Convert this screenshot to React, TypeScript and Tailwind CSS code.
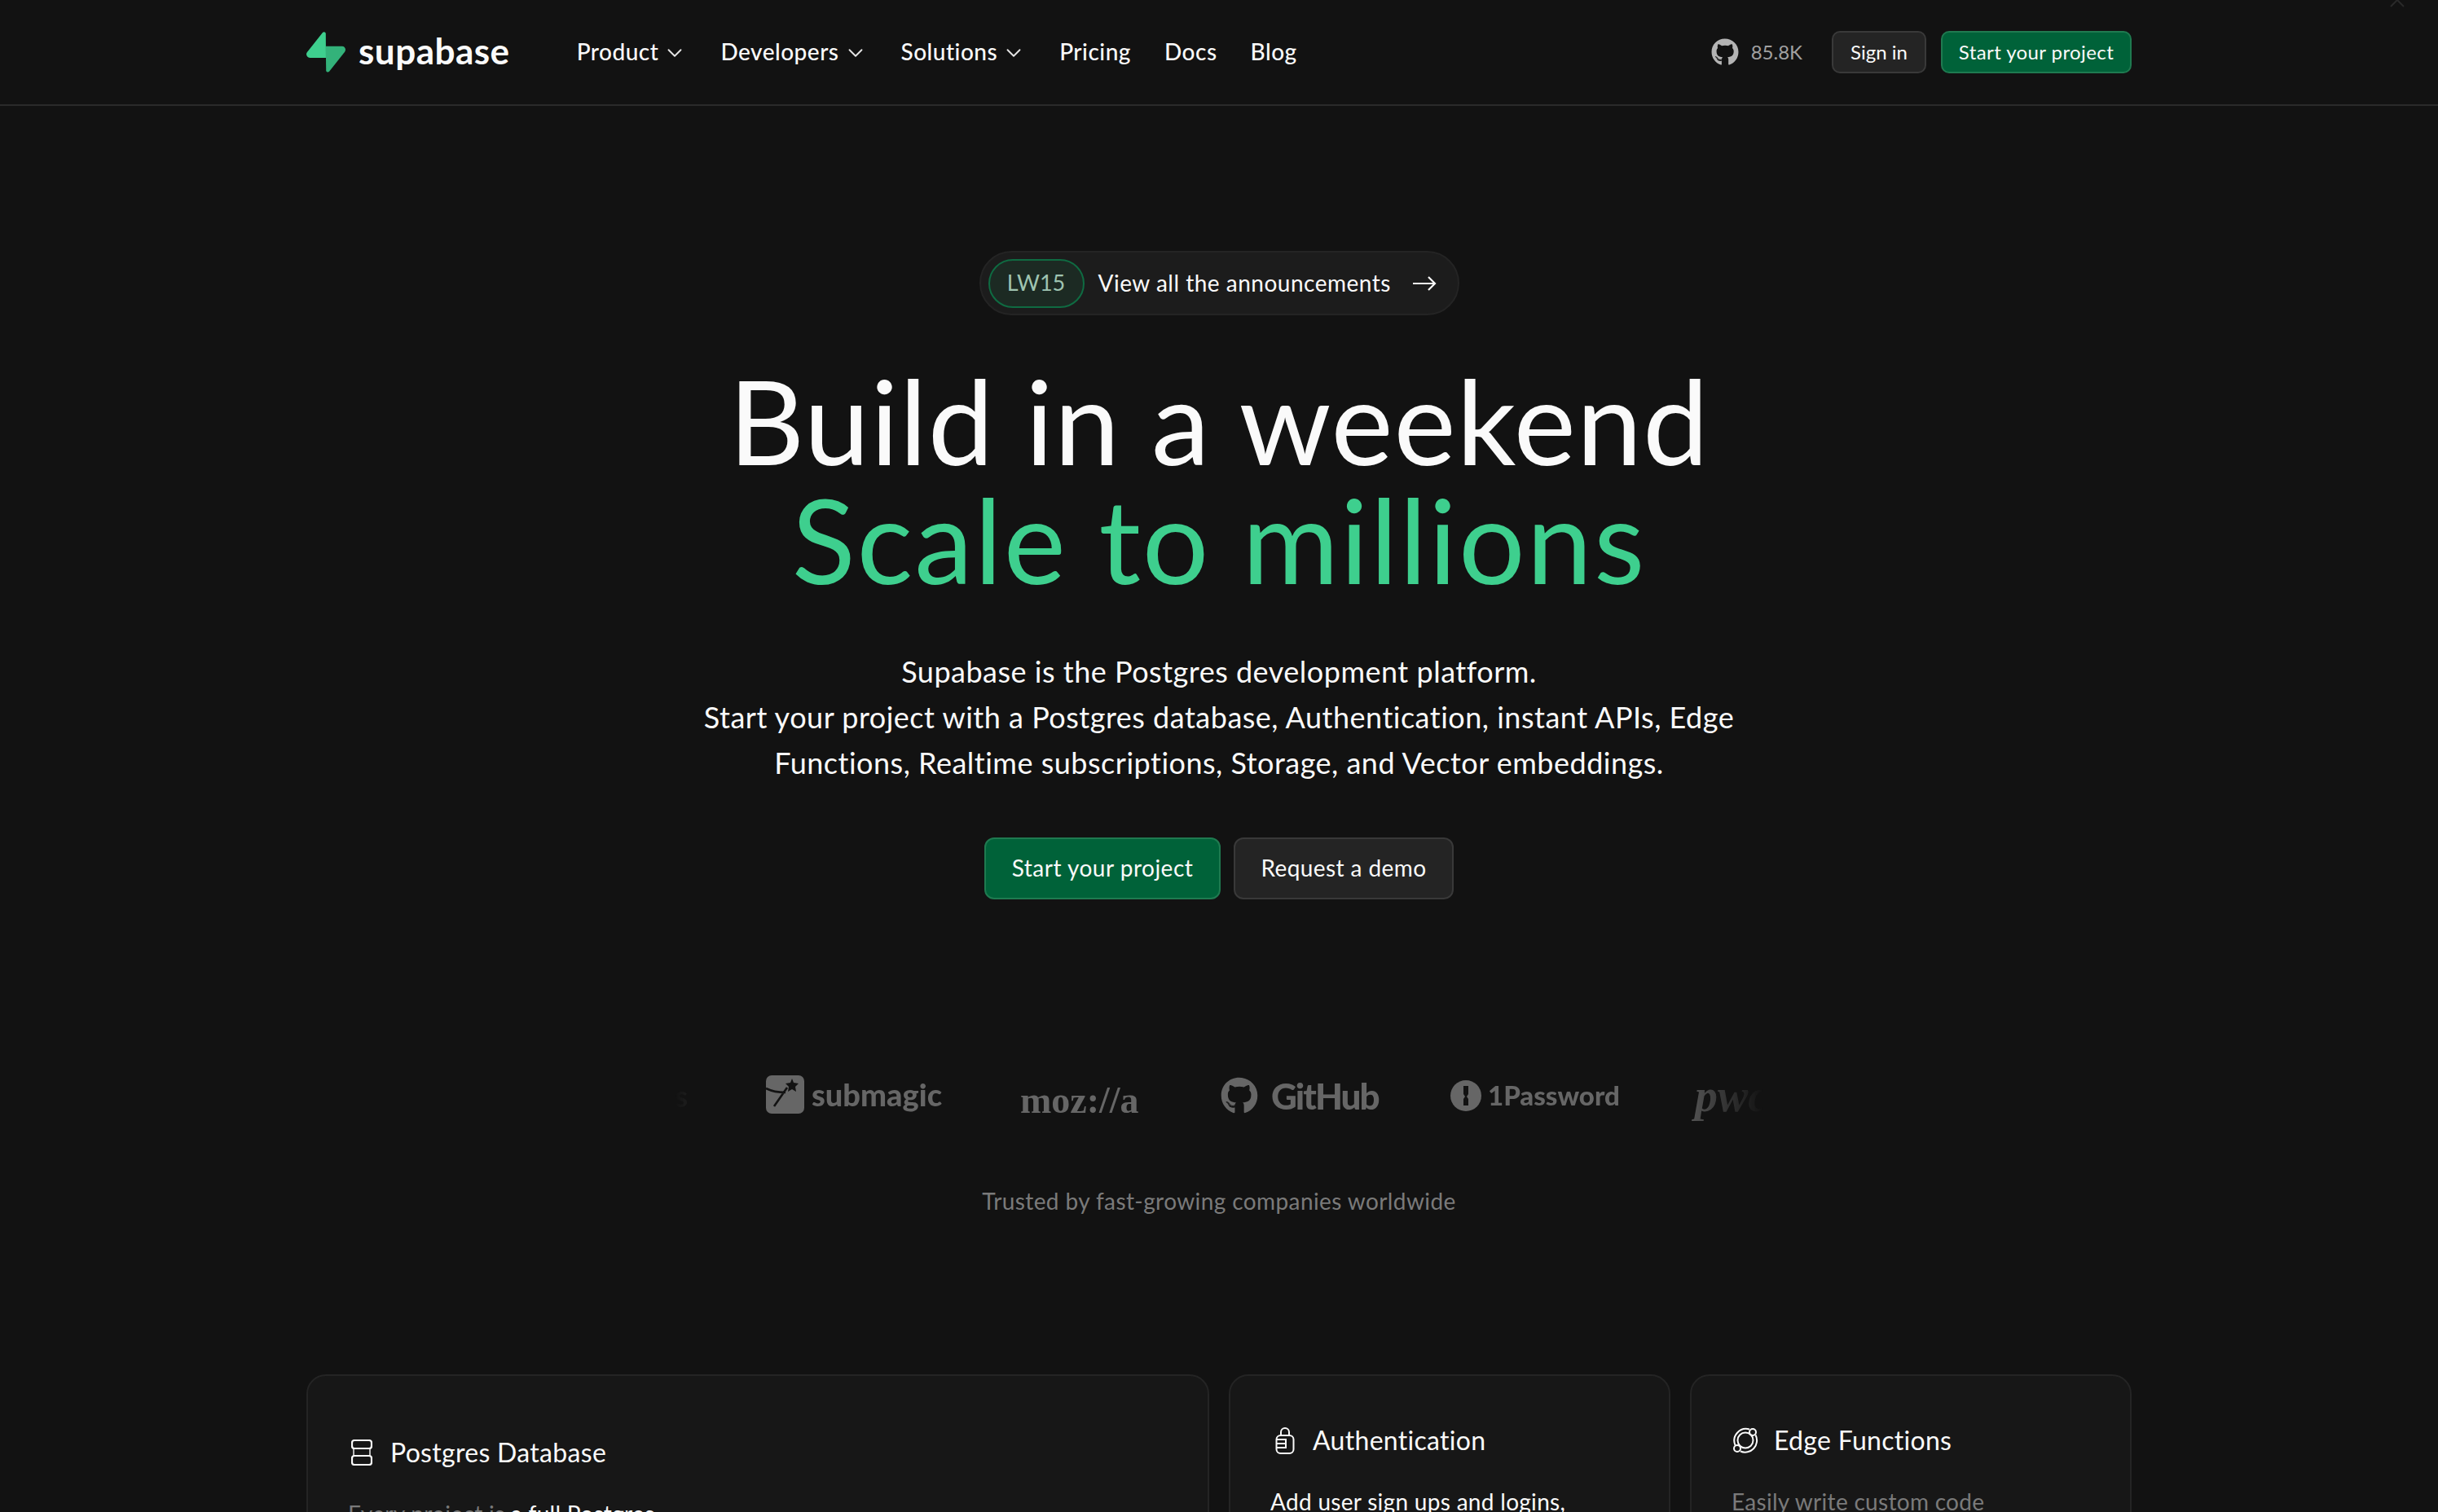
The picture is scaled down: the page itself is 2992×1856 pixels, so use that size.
import React from 'react';
import { ChevronDown } from 'lucide-react';
import { FaGithub } from 'react-icons/fa';

const font = "font-['Lato','Noto_Sans',sans-serif]";

const Bolt: React.FC = () => (
  <svg width="48" height="50" viewBox="0 0 109 113" fill="none">
    <path d="M63.7076 110.284C60.8481 113.885 55.0502 111.912 54.9813 107.314L53.9738 40.0627L99.1935 40.0627C107.384 40.0627 111.952 49.5228 106.859 55.9374L63.7076 110.284Z" fill="#33b27a" />
    <path d="M45.317 2.07103C48.1765 -1.53037 53.9745 0.442937 54.0434 5.041L54.4849 72.2922H9.83113C1.64038 72.2922 -2.92775 62.8321 2.1655 56.4175L45.317 2.07103Z" fill="#3ECF8E" />
  </svg>
);

const NavLink: React.FC<{ label: string; menu?: boolean; className?: string }> = ({ label, menu, className }) => (
  <a className={`flex items-center text-[28px] font-medium tracking-[0.5px] text-[#fafafa] ${className ?? ''}`}>
    {label}
    {menu && <ChevronDown size={30} strokeWidth={1.5} className="mt-[5px] ml-[5px] text-[#e5e5e5]" />}
  </a>
);

const DatabaseIcon = () => (
  <svg width="26" height="32" viewBox="0 0 26 32" fill="none" stroke="#fafafa" strokeWidth="2.2">
    <rect x="1" y="1" width="24" height="10" rx="3" />
    <rect x="1" y="20" width="24" height="11" rx="3" />
    <path d="M3 11v9M23 11v9" strokeWidth="1.4" />
  </svg>
);

const LockIcon = () => (
  <svg width="24" height="33" viewBox="0 0 24 33" fill="none" stroke="#fafafa" strokeWidth="2">
    <path d="M7 10V6a5 5 0 0 1 10 0v4" />
    <rect x="1.5" y="10" width="21" height="22" rx="5" />
    <path d="M2 15h11v10H2M2 20h11" />
  </svg>
);

const OrbitIcon = () => (
  <svg width="34" height="34" viewBox="0 0 34 34" fill="none" stroke="#fafafa" strokeWidth="2">
    <circle cx="17" cy="17" r="9.5" />
    <path d="M4.5 23A14.5 14.5 0 0 1 22 3.5" />
    <path d="M29.5 10.5A14.5 14.5 0 0 1 11 30.5" />
    <circle cx="26" cy="7" r="4" />
    <circle cx="7" cy="27" r="4" />
  </svg>
);

const Card: React.FC<{ icon: React.ReactNode; title: string; span?: boolean; titleClass: string; children: React.ReactNode }> = ({ icon, title, span, titleClass, children }) => (
  <div className={`${span ? 'col-span-2 pt-[70px]' : 'pt-[55px]'} h-[400px] rounded-[24px] border-2 border-[#242424] bg-[#171717] pl-[49px]`}>
    <div className={`flex items-center text-[32px] tracking-[0.3px] text-[#fafafa] ${titleClass}`}>
      {icon}
      {title}
    </div>
    <p className={`${span ? 'mt-[31px]' : 'mt-[31px]'} text-[28px] leading-[40px] tracking-[0.3px] text-[#fafafa]`}>{children}</p>
  </div>
);

const App: React.FC = () => {
  return (
    <div className={`${font} relative h-screen overflow-hidden bg-[#121212] text-[#fafafa]`}>
      <svg className="absolute top-[-10px] right-[40px]" width="20" height="20" viewBox="0 0 20 20" fill="none" stroke="#2a2a2a" strokeWidth="2">
        <path d="M2 2l16 16M18 2L2 18" />
      </svg>

      <header className="h-[130px] border-b-2 border-[#2a2a2a]">
        <div className="mx-auto flex h-[128px] w-[2240px] items-center">
          <div className="flex items-center gap-[16px]">
            <Bolt />
            <span className="pb-[5px] text-[44px] font-bold tracking-[0.5px]">supabase</span>
          </div>
          <nav className="ml-[82px] flex items-center pb-[3px]">
            <NavLink label="Product" menu />
            <NavLink label="Developers" menu className="ml-[41px]" />
            <NavLink label="Solutions" menu className="ml-[41px]" />
            <NavLink label="Pricing" className="ml-[41px]" />
            <NavLink label="Docs" className="ml-[41px]" />
            <NavLink label="Blog" className="ml-[41px]" />
          </nav>
          <div className="ml-auto flex items-center">
            <FaGithub size={34} className="text-[#b4b4b4]" />
            <span className="ml-[15px] text-[24px] text-[#a0a0a0]">85.8K</span>
            <button className="ml-[36px] h-[52px] w-[116px] rounded-[10px] border-2 border-[#393939] bg-[#242424] text-[24px]">Sign in</button>
            <button className="ml-[18px] h-[52px] w-[234px] rounded-[10px] border-2 border-[#1f7a50] bg-[#006239] text-[24px] tracking-[0.4px]">Start your project</button>
          </div>
        </div>
      </header>

      <section className="flex flex-col items-center pt-[178px]">
        <div className="flex h-[79px] w-[589px] items-center rounded-full border-2 border-[#242424] bg-[#1c1c1c] pl-[9px]">
          <span className="flex h-[60px] w-[118px] items-center justify-center rounded-full border-2 border-[#0f6b42] bg-[#1c2a23] text-[27px] text-[#9fc4b1]">LW15</span>
          <span className="ml-[17px] pb-[2px] text-[28px] tracking-[0.5px]">View all the announcements</span>
          <svg className="ml-[26px]" width="30" height="20" viewBox="0 0 30 20" fill="none" stroke="#fafafa" strokeWidth="2.2">
            <path d="M1 10h27M20 2l8 8-8 8" />
          </svg>
        </div>
        <h1 className="mt-[56px] text-center text-[144px] leading-[146px] font-normal tracking-[1px]">
          Build in a weekend
          <br />
          <span className="tracking-[2px] text-[#3ECF8E]">Scale to millions</span>
        </h1>
        <p className="mt-[61px] w-[1300px] text-center text-[36px] leading-[56px] tracking-[0.5px]">
          Supabase is the Postgres development platform.
          <br />
          Start your project with a Postgres database, Authentication, instant APIs, Edge
          <br />
          Functions, Realtime subscriptions, Storage, and Vector embeddings.
        </p>
        <div className="mt-[64px] flex gap-[16px]">
          <button className="h-[76px] w-[290px] rounded-[12px] border-2 border-[#1f7a50] bg-[#006239] pb-[2px] text-[28px] tracking-[0.5px]">Start your project</button>
          <button className="h-[76px] w-[270px] rounded-[12px] border-2 border-[#393939] bg-[#242424] pb-[2px] text-[28px] tracking-[0.4px]">Request a demo</button>
        </div>

        {/* logo strip, cut off at both ends like the marquee */}
        <div className="mt-[191px] flex h-[100px] w-[1336px] items-center overflow-hidden text-[#666666] [mask-image:linear-gradient(to_right,transparent,black_8.5%,black_91.5%,transparent)]">
          <div className="flex w-[16px] shrink-0 justify-end text-[36px] font-bold">
            <span className="shrink-0">Loops</span>
          </div>
          <div className="ml-[96px] flex w-[218px] shrink-0 items-center gap-[9px] pb-[4px] text-[38px] font-black">
            <svg className="shrink-0" width="47" height="47" viewBox="0 0 47 47">
              <rect width="47" height="47" rx="7" fill="#666666" />
              <path d="M0 16c10 5 18 5 24 5M10 38l16-23" stroke="#121212" strokeWidth="2.6" fill="none" />
              <path d="M32 4l2 5 6 1-4 4 1 6-5-3-5 3 1-6-4-4 6-1z" fill="#121212" />
            </svg>
            submagic
          </div>
          <span className="ml-[94px] w-[150px] shrink-0 pt-[10px] font-['Liberation_Serif',serif] text-[46px] font-bold">moz://a</span>
          <div className="ml-[96px] flex w-[185px] shrink-0 items-center gap-[16px] text-[44px] font-black tracking-[-2px]">
            <FaGithub size={46} className="shrink-0" />
            GitHub
          </div>
          <div className="ml-[97px] flex w-[197px] shrink-0 items-center gap-[8px] text-[33px] font-black">
            <svg className="shrink-0" width="38" height="38" viewBox="0 0 38 38">
              <circle cx="19" cy="19" r="19" fill="#666666" />
              <path d="M16 7h6v10l-2 3 2 3v8h-6v-8l2-3-2-3z" fill="#121212" />
            </svg>
            1Password
          </div>
          <span className="ml-[103px] shrink-0 font-['Liberation_Serif',serif] text-[56px] font-bold italic">pwc</span>
        </div>
        <p className="mt-[58px] text-[28px] tracking-[0.4px] text-[#7a7a7a]">Trusted by fast-growing companies worldwide</p>
      </section>

      <section className="mx-auto mt-[192px] grid w-[2240px] grid-cols-4 gap-[24px]">
        <Card span titleClass="gap-[22px] pl-[4px]" icon={<DatabaseIcon />} title="Postgres Database">
          <span className="text-[#7a7a7a]">Every project is </span>a full Postgres
        </Card>
        <Card titleClass="gap-[22px] pl-[6px]" icon={<LockIcon />} title="Authentication">Add user sign ups and logins,</Card>
        <Card titleClass="gap-[18px]" icon={<OrbitIcon />} title="Edge Functions">
          <span className="text-[#7a7a7a]">Easily write custom code</span>
        </Card>
      </section>
    </div>
  );
};

export default App;
